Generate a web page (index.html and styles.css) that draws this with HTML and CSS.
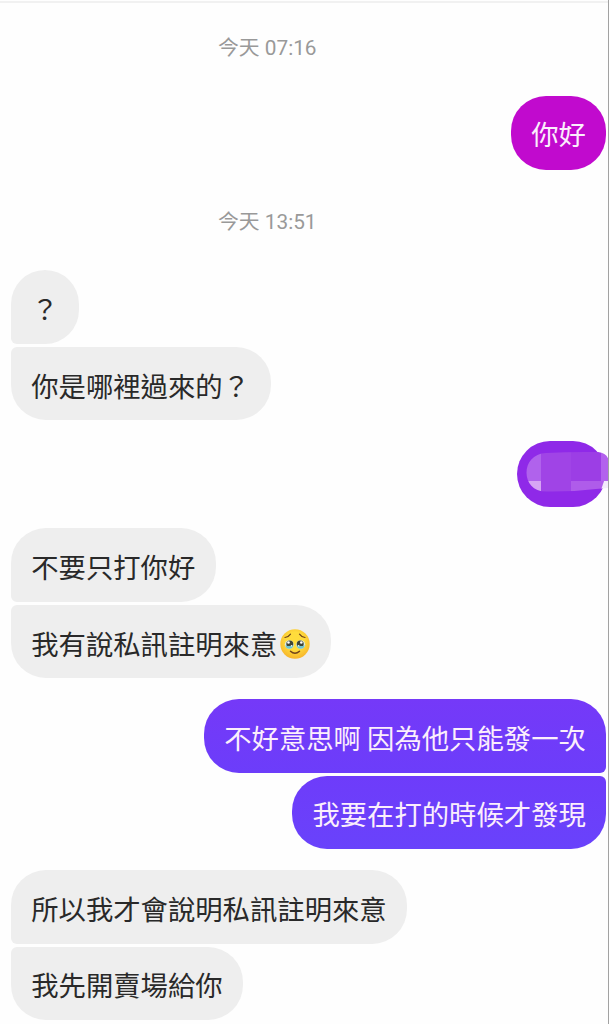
FILE: index.html
```html
<!DOCTYPE html>
<html lang="zh-Hant">
<head>
<meta charset="utf-8">
<title>Chat</title>
<link rel="stylesheet" href="styles.css">
</head>
<body>
<main class="chat">
  <time class="stamp stamp-first">今天 07:16</time>
  <section class="group sent magenta">
    <p class="bubble">你好</p>
  </section>
  <time class="stamp">今天 13:51</time>
  <section class="group received">
    <p class="bubble">？</p>
    <p class="bubble">你是哪裡過來的？</p>
  </section>
  <section class="group sent violet">
    <div class="bubble masked">
      <svg class="mosaic" viewBox="0 0 83 42" width="83" height="42">
        <defs><clipPath id="stroke"><path d="M20 2Q45 .5 72 1Q83 2 83 13V37L70 38Q45 41 20 40.500C-6 40.500-6 3 20 2Z"/></clipPath></defs>
        <g clip-path="url(#stroke)">
          <path fill="#b062ec" d="M0 0H15V30H0Z"/>
          <path fill="#a044e6" d="M15 0H45V42H15Z"/>
          <path fill="#9c3ee5" d="M45 0H75V30H45Z"/>
          <path fill="#b362ed" d="M75 0H83V30H75Z"/>
          <path fill="#d7a4f4" d="M0 30H15V42H0Z"/>
          <path fill="#af5cea" d="M45 30H78L75 42H45Z"/>
          <path fill="#f4eafb" d="M78 30H83V42H74Z"/>
        </g>
      </svg>
    </div>
  </section>
  <section class="group received">
    <p class="bubble">不要只打你好</p>
    <p class="bubble">我有說私訊註明來意<svg class="emoji" viewBox="0 0 30 30" role="img" aria-label="🥹">
        <defs><radialGradient id="face" cx=".5" cy=".4" r=".6"><stop offset=".5" stop-color="#ffdc3c"/><stop offset="1" stop-color="#f7b52c"/></radialGradient></defs>
        <circle cx="15" cy="15" r="14.700" fill="url(#face)"/>
        <g fill="none" stroke="#70431b" stroke-width="1.200" stroke-linecap="round">
          <path d="M5 8.500Q8.500 8.200 10.500 5.200M25 8.500Q21.500 8.200 19.500 5.200"/>
          <path d="M10.500 22.200Q15 26.300 19.500 22.200" stroke-width="1.500"/>
        </g>
        <ellipse cx="9.300" cy="15.500" rx="4.500" ry="4.300" fill="#dcebe4"/>
        <ellipse cx="20.700" cy="15.500" rx="4.500" ry="4.300" fill="#dcebe4"/>
        <circle cx="9.800" cy="15" r="3.500" fill="#3e4436"/>
        <circle cx="20.200" cy="15" r="3.500" fill="#3e4436"/>
        <path fill="#72c5cf" d="M5.300 16.200Q9.500 18 13.500 16.200Q12.800 19.800 9.300 19.800T5.300 16.200ZM16.500 16.200Q20.500 18 24.700 16.200Q24.200 19.800 20.700 19.800T16.500 16.200Z"/>
        <g fill="#fff"><circle cx="8.500" cy="13.500" r="1.300"/><circle cx="21.300" cy="13.500" r="1.300"/><circle cx="11.500" cy="16.700" r=".8"/><circle cx="18.700" cy="16.700" r=".8"/></g>
      </svg></p>
  </section>
  <section class="group sent indigo">
    <p class="bubble">不好意思啊 因為他只能發一次</p>
    <p class="bubble">我要在打的時候才發現</p>
  </section>
  <section class="group received">
    <p class="bubble">所以我才會說明私訊註明來意</p>
    <p class="bubble">我先開賣場給你</p>
  </section>
</main>
</body>
</html>
```
FILE: styles.css
```css
* {
  box-sizing: border-box;
}

body {
  margin: 0;
  background: #fefefe;
  font-family: "Noto Sans CJK TC", sans-serif;
}

.chat {
  display: flex;
  flex-direction: column;
  height: 1024px;
  overflow: hidden;
  padding: 0 2px 0 11px;
  background: linear-gradient(#f1f1f1, #f1f1f1) 0 1px / 100% 2px no-repeat;
  border-right: 1px solid #a2a2a2;
}

.stamp {
  flex: none;
  height: 30px;
  margin: 37.300px 0 33.500px;
  padding-left: 207px;
  color: #999;
  font: 20.800px/30px Roboto, "Noto Sans CJK TC", sans-serif;
  white-space: nowrap;
}

.stamp-first {
  margin: 33px 0;
}

.group {
  display: flex;
  flex: none;
  flex-direction: column;
  align-items: flex-start;
  gap: 3px;
}

.group + .group {
  margin-top: 20.900px;
}

.bubble {
  display: flex;
  align-items: center;
  height: 73.500px;
  margin: 0;
  padding: 2px 20.700px 0 20.200px;
  border-radius: 35px;
  background: #eee;
  color: #292929;
  font-size: 27.350px;
  line-height: 40px;
  white-space: pre;
}

.received .bubble:not(:last-child) {
  border-bottom-left-radius: 6px;
}

.received .bubble:not(:first-child) {
  border-top-left-radius: 6px;
}

.sent {
  align-items: flex-end;
}

.sent .bubble {
  padding-right: 20.200px;
  color: #fbeefc;
}

.sent .bubble:not(:last-child) {
  border-bottom-right-radius: 6px;
}

.sent .bubble:not(:first-child) {
  border-top-right-radius: 6px;
}

.magenta .bubble {
  padding-top: 1px;
  background: #c10ace;
}

.violet .bubble {
  background: #8f29e8;
}

.indigo .bubble {
  background: linear-gradient(#7539f8, #6c3dfa);
}

.indigo .bubble:last-child {
  background: linear-gradient(#6e3cfa, #6942fb);
}

.sent .masked {
  width: 89px;
  height: 66.200px;
  padding: 0 0 0 9px;
  border-radius: 33px;
}

.mosaic {
  flex: none;
  margin-top: -4px;
}

.emoji {
  flex: none;
  width: 30px;
  height: 30px;
  margin: 2px 1px 0 2.500px;
}
```
